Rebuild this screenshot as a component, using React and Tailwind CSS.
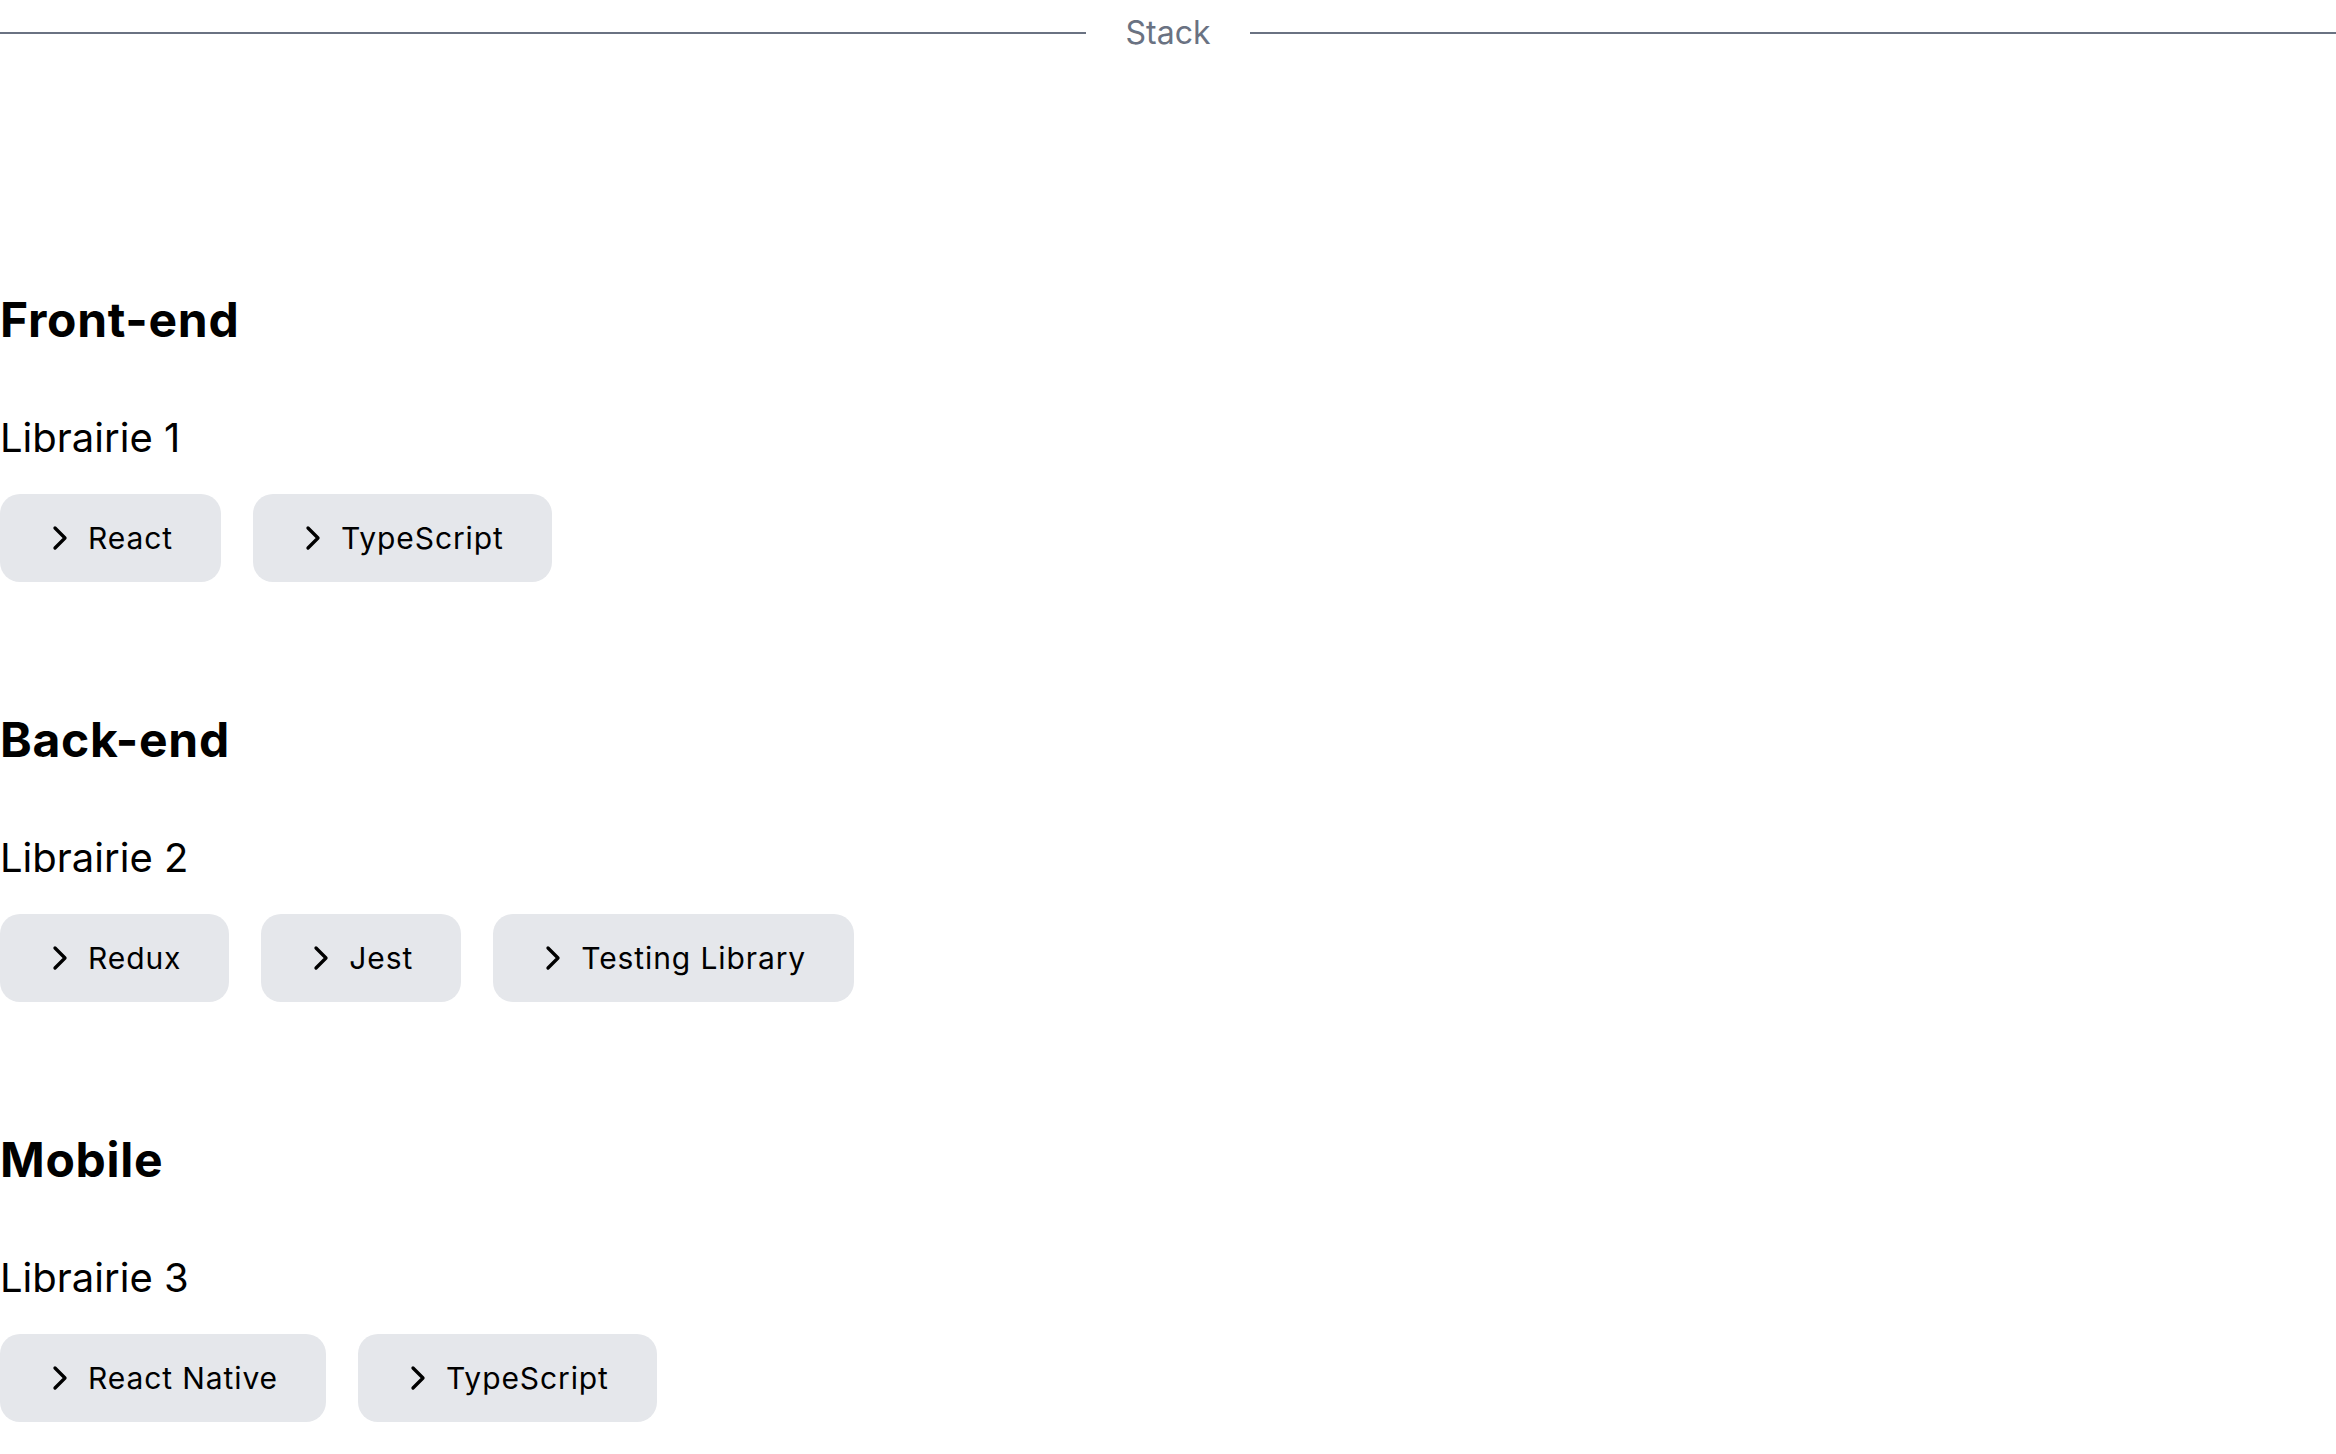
import { ChevronRight } from "lucide-react";

const sections = [
  { title: "Front-end", lib: "Librairie 1", items: ["React", "TypeScript"] },
  { title: "Back-end", lib: "Librairie 2", items: ["Redux", "Jest", "Testing Library"] },
  { title: "Mobile", lib: "Librairie 3", items: ["React Native", "TypeScript"] },
];

function Pill({ label }) {
  return (
    <div className="flex items-center gap-2 rounded-[20px] bg-gray-200 py-6 pl-10 pr-12 text-3xl tracking-[0.03em] text-black">
      <ChevronRight size={40} strokeWidth={2} className="shrink-0" />
      <span>{label}</span>
    </div>
  );
}

export default function App() {
  return (
    <div className="min-h-screen bg-white text-black" style={{ fontFamily: "Inter, 'Noto Sans', sans-serif" }}>
      <div className="flex h-[66px] items-center">
        <div className="h-[2px] flex-1 bg-gray-500" />
        <span className="px-10 text-[32px] leading-[48px] text-gray-500">Stack</span>
        <div className="h-[2px] flex-1 bg-gray-500" />
      </div>

      <div className="mt-[230px] flex flex-col gap-[134px]">
        {sections.map((s) => (
          <section key={s.title}>
            <h2 className="text-[48px] font-bold leading-none tracking-[0.015em]">{s.title}</h2>
            <p className="mt-16 text-[40px] leading-[60px]">{s.lib}</p>
            <div className="mt-[26px] flex gap-8">
              {s.items.map((it) => (
                <Pill key={it} label={it} />
              ))}
            </div>
          </section>
        ))}
      </div>
    </div>
  );
}
